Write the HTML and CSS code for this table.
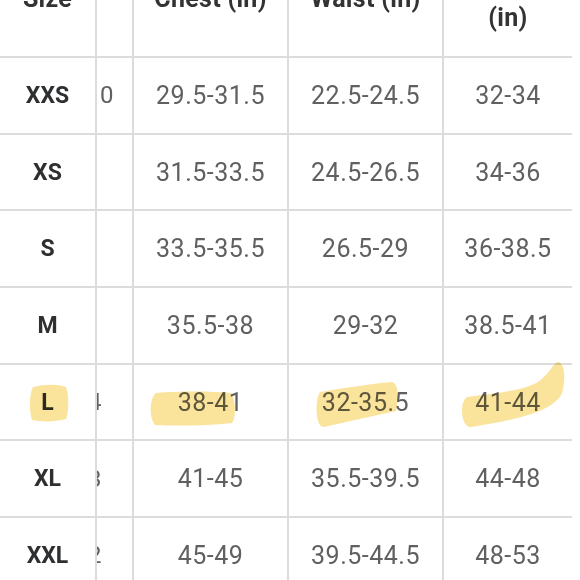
FILE: index.html
```html
<!DOCTYPE html>
<html>
<head>
<meta charset="utf-8">
<link rel="stylesheet" href="styles.css">
</head>
<body>
<div class="page">
  <div class="chart">
    <div class="cell head">Size</div>
    <div class="cell peek"></div>
    <div class="cell head">Chest (in)</div>
    <div class="cell head">Waist (in)</div>
    <div class="cell head">Hip<br>(in)</div>

    <div class="cell label">XXS</div>
    <div class="cell peek"><span class="peek-full">0</span></div>
    <div class="cell num">29.5-31.5</div>
    <div class="cell num">22.5-24.5</div>
    <div class="cell num">32-34</div>

    <div class="cell label">XS</div>
    <div class="cell peek"></div>
    <div class="cell num">31.5-33.5</div>
    <div class="cell num">24.5-26.5</div>
    <div class="cell num">34-36</div>

    <div class="cell label">S</div>
    <div class="cell peek"></div>
    <div class="cell num">33.5-35.5</div>
    <div class="cell num">26.5-29</div>
    <div class="cell num">36-38.5</div>

    <div class="cell label">M</div>
    <div class="cell peek"></div>
    <div class="cell num">35.5-38</div>
    <div class="cell num">29-32</div>
    <div class="cell num">38.5-41</div>

    <div class="cell label">L</div>
    <div class="cell peek"><span class="peek-tail">4</span></div>
    <div class="cell num">38-41</div>
    <div class="cell num">32-35.5</div>
    <div class="cell num">41-44</div>

    <div class="cell label">XL</div>
    <div class="cell peek"><span class="peek-tail">3</span></div>
    <div class="cell num">41-45</div>
    <div class="cell num">35.5-39.5</div>
    <div class="cell num">44-48</div>

    <div class="cell label">XXL</div>
    <div class="cell peek"><span class="peek-tail">2</span></div>
    <div class="cell num">45-49</div>
    <div class="cell num">39.5-44.5</div>
    <div class="cell num">48-53</div>
  </div>

  <svg class="marker" width="580" height="580" viewBox="0 0 580 580">
    <path d="M33,387 C45,384 58,384 66,387 C69,395 69,412 66,419 C55,422 42,422 32,420 C29,410 29,395 33,387 Z"/>
    <path d="M156,393 C180,391 210,391 231,393 C236,400 236,418 232,423 C205,426 178,426 155,425 C149,418 149,399 156,393 Z"/>
    <path d="M320,392 C345,388 370,384 392,382 C399,384 399,400 396,411 C372,416 347,422 324,427 C316,428 314,402 320,392 Z"/>
    <path d="M467,397 C492,393 520,392 538,382 C548,375 552,366 557,362 C565,361 566,380 562,393 C554,411 520,419 471,427 C461,428 459,402 467,397 Z"/>
  </svg>
</div>
</body>
</html>
```

FILE: styles.css
```css
html, body {
  margin: 0;
  padding: 0;
  background: #ffffff;
}

.page {
  position: relative;
  width: 580px;
  height: 580px;
  overflow: hidden;
}

.chart {
  display: grid;
  grid-template-columns: 95px 35px 153px 153px 128px;
  grid-template-rows: 116px repeat(7, 74.7px);
  gap: 2px;
  width: 570px;
  padding-right: 2px;
  margin-top: -60px;
  background: #dcdcdc;
  font-family: Roboto, "Noto Sans", sans-serif;
}

.cell {
  background: #ffffff;
  display: flex;
  align-items: center;
  justify-content: center;
  text-align: center;
  overflow: hidden;
}

.head {
  font-weight: 700;
  font-size: 25px;
  line-height: 39px;
  color: #333333;
  letter-spacing: 0.3px;
}

.label {
  font-weight: 700;
  font-size: 23px;
  color: #2d2f31;
}

.num {
  font-weight: 400;
  font-size: 25px;
  color: #606060;
  letter-spacing: 0.5px;
}

.peek {
  justify-content: flex-start;
  font-size: 24px;
  color: #606060;
}

.peek-full {
  margin-left: 3px;
}

.peek-tail {
  margin-left: -9px;
}

.marker {
  position: absolute;
  top: 0;
  left: 0;
  pointer-events: none;
  mix-blend-mode: multiply;
}

.marker path {
  fill: rgb(249, 220, 130);
  opacity: 0.8;
}
```
